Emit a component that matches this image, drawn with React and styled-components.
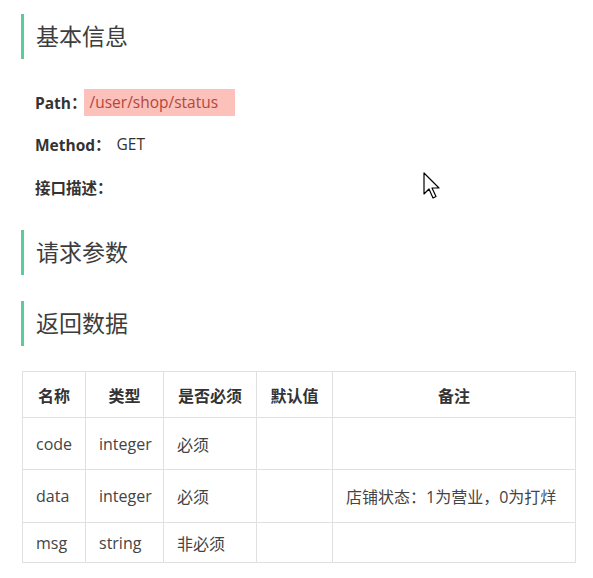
import React from "react";
import styled, { createGlobalStyle } from "styled-components";

const GlobalStyle = createGlobalStyle`
  body {
    margin: 0;
    background: #fff;
    font-family: "Open Sans", "Noto Sans CJK SC", sans-serif;
    color: #333;
  }
`;

const Page = styled.div`
  position: relative;
  width: 593px;
  height: 578px;
  padding: 14px 0 0 21px;
  box-sizing: border-box;
  overflow: hidden;
`;

const SectionTitle = styled.h2`
  margin: ${(p) => p.$top || 0}px 0 0;
  height: 45px;
  line-height: 45px;
  padding-left: 12px;
  border-left: 3px solid #5ccb9a;
  font-size: 23px;
  font-weight: 400;
  color: #3d3d3d;
`;

const Field = styled.div`
  display: flex;
  align-items: center;
  height: 27px;
  margin-top: ${(p) => p.$top}px;
  padding-left: 14px;
  font-size: 15.5px;
`;

const Label = styled.span`
  font-weight: 700;
  color: #333;
`;

const Value = styled.span`
  margin-left: ${(p) => (p.$code ? -3 : 6)}px;
  color: ${(p) => (p.$code ? "#b4463d" : "#333")};
  background: ${(p) => (p.$code ? "#fbc1ba" : "transparent")};
  padding: 0 ${(p) => (p.$code ? "6px" : "0")};
  width: ${(p) => (p.$code ? "151px" : "auto")};
  box-sizing: border-box;
  line-height: 27px;
`;

const Table = styled.table`
  margin: 25px 0 0 1px;
  width: 553px;
  border-collapse: collapse;
  table-layout: fixed;
  font-size: 16px;
`;

const Th = styled.th`
  height: 45px;
  border: 1.5px solid #e0e0e0;
  font-weight: 700;
  color: #333;
  text-align: center;
  padding: 0;
`;

const Td = styled.td`
  height: ${(p) => p.$h}px;
  border: 1.5px solid #e0e0e0;
  padding: 0 0 0 13px;
  color: #444;
  white-space: nowrap;
`;

const Cursor = styled.svg`
  position: absolute;
  left: 423px;
  top: 172px;
`;

const cols = [63, 78, 93, 76, 243];
const rows = [
  { name: "code", type: "integer", req: "必须", note: "", h: 51 },
  { name: "data", type: "integer", req: "必须", note: "店铺状态：1为营业，0为打烊", h: 52 },
  { name: "msg", type: "string", req: "非必须", note: "", h: 39 },
];

export default function App() {
  return (
    <Page>
      <GlobalStyle />
      <SectionTitle>基本信息</SectionTitle>
      <Field $top={30}>
        <Label>Path：</Label>
        <Value $code>/user/shop/status</Value>
      </Field>
      <Field $top={15}>
        <Label>Method：</Label>
        <Value>GET</Value>
      </Field>
      <Field $top={16}>
        <Label>接口描述：</Label>
      </Field>
      <SectionTitle $top={29}>请求参数</SectionTitle>
      <SectionTitle $top={26}>返回数据</SectionTitle>
      <Table>
        <colgroup>
          {cols.map((w, i) => (
            <col key={i} style={{ width: w }} />
          ))}
        </colgroup>
        <thead>
          <tr>
            <Th>名称</Th>
            <Th>类型</Th>
            <Th>是否必须</Th>
            <Th>默认值</Th>
            <Th>备注</Th>
          </tr>
        </thead>
        <tbody>
          {rows.map((r) => (
            <tr key={r.name}>
              <Td $h={r.h}>{r.name}</Td>
              <Td $h={r.h}>{r.type}</Td>
              <Td $h={r.h}>{r.req}</Td>
              <Td $h={r.h} />
              <Td $h={r.h}>{r.note}</Td>
            </tr>
          ))}
        </tbody>
      </Table>
      <Cursor width="20" height="30" viewBox="0 0 20 30">
        <path
          d="M1 1 L1 22 L6 17 L10 26 L13 24.5 L9 16 L16 16 Z"
          fill="#fff"
          stroke="#000"
          strokeWidth="1.2"
          strokeLinejoin="round"
        />
      </Cursor>
    </Page>
  );
}
